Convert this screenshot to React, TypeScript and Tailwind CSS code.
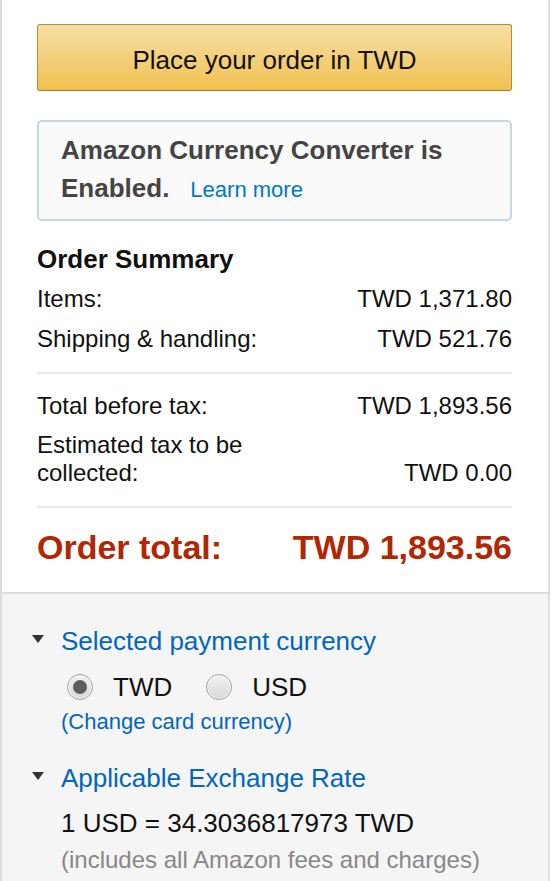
import React from "react";

function Triangle() {
  return (
    <div className="w-[29px] shrink-0 pt-[9px]">
      <svg width="12" height="8" viewBox="0 0 12 8" className="block">
        <polygon points="0,0 12,0 6,8" fill="#333333" />
      </svg>
    </div>
  );
}

function Radio({ checked }: { checked: boolean }) {
  return (
    <div className="w-[26px] h-[26px] rounded-full border border-[#a0a0a0] bg-linear-to-b from-[#f2f2f2] to-[#d8d8d8] shadow-[inset_0_0_0_1px_#fafafa] flex items-center justify-center shrink-0">
      {checked && <div className="w-[14px] h-[14px] rounded-full bg-[#5e5e5e]" />}
    </div>
  );
}

function Row({ label, value }: { label: React.ReactNode; value: string }) {
  return (
    <div className="flex justify-between items-end text-[24px] leading-[28px] text-[#111]">
      <div>{label}</div>
      <div className="whitespace-nowrap">{value}</div>
    </div>
  );
}

export default function App() {
  return (
    <div
      className="w-[550px] border-x-2 border-[#dddddd] bg-white"
      style={{ fontFamily: '"Liberation Sans", Arial, sans-serif' }}
    >
      <div className="pt-[24px] pl-[35px] pr-[36px] pb-[26px]">
        <button className="w-full h-[67px] pt-[4px] flex items-center justify-center rounded-[3px] border border-[#b38d35] border-b-[#a07a27] bg-linear-to-b from-[#f7dfa5] to-[#f0c14b] text-[26px] leading-[30px] text-[#111]">
          Place your order in TWD
        </button>

        <div className="mt-[29px] rounded-[5px] border-2 border-[#c3d8e3] bg-[#fafafa] pl-[22px] pr-[16px] pt-[9px] pb-[10px]">
          <div className="text-[26px] leading-[38px] font-bold text-[#444]">Amazon Currency Converter is</div>
          <div className="flex items-baseline leading-[38px]">
            <span className="text-[26px] font-bold text-[#444]">Enabled.</span>
            <a className="ml-[21px] text-[22px] text-[#0079c1]">Learn more</a>
          </div>
        </div>

        <div className="mt-[23px] text-[26px] leading-[30px] font-bold text-[#111]">Order Summary</div>

        <div className="mt-[11px]">
          <Row label="Items:" value="TWD 1,371.80" />
        </div>
        <div className="mt-[12px]">
          <Row label="Shipping & handling:" value="TWD 521.76" />
        </div>

        <div className="mt-[19px] h-[2px] bg-[#e7e7e7]" />

        <div className="mt-[18px]">
          <Row label="Total before tax:" value="TWD 1,893.56" />
        </div>
        <div className="mt-[11px]">
          <Row
            label={
              <>
                Estimated tax to be
                <br />
                collected:
              </>
            }
            value="TWD 0.00"
          />
        </div>

        <div className="mt-[19px] h-[2px] bg-[#e7e7e7]" />

        <div className="mt-[20px] flex justify-between text-[34px] leading-[38px] font-bold text-[#b12704]">
          <div>Order total:</div>
          <div>TWD 1,893.56</div>
        </div>
      </div>

      <div className="border-t-2 border-[#dddddd] bg-[#f5f5f5] pt-[32px] pl-[30px] pr-[36px] pb-[40px]">
        <div className="flex">
          <Triangle />
          <div className="text-[26px] leading-[30px] text-[#0066c0]">Selected payment currency</div>
        </div>
        <div className="pl-[29px]">
          <div className="mt-[16px] flex items-center pl-[6px] text-[26px] leading-[30px] text-[#111]">
            <Radio checked />
            <span className="ml-[20px]">TWD</span>
            <span className="ml-[34px]">
              <Radio checked={false} />
            </span>
            <span className="ml-[20px]">USD</span>
          </div>
          <div className="mt-[7px] text-[22px] leading-[26px] text-[#0066c0]">(Change card currency)</div>
        </div>

        <div className="mt-[28px] flex">
          <Triangle />
          <div className="text-[26px] leading-[30px] text-[#0066c0]">Applicable Exchange Rate</div>
        </div>
        <div className="pl-[29px]">
          <div className="mt-[15px] text-[26px] leading-[30px] text-[#111]">1 USD = 34.3036817973 TWD</div>
          <div className="mt-[8px] text-[24px] leading-[28px] text-[#888]">(includes all Amazon fees and charges)</div>
        </div>
      </div>
    </div>
  );
}
